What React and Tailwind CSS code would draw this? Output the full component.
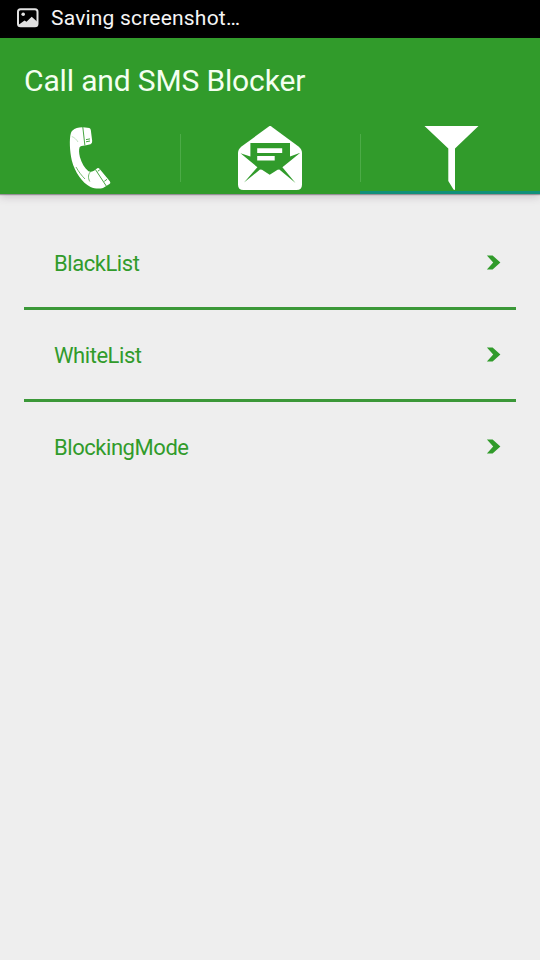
const rows = ["BlackList", "WhiteList", "BlockingMode"];

function PictureIcon() {
  return (
    <svg className="h-[20px] w-[22px]" viewBox="0 0 22 20">
      <rect x="1" y="1.2" width="19.5" height="17" rx="2.5" fill="none" stroke="#e2e2e2" strokeWidth="2" />
      <circle cx="6.2" cy="6.2" r="1.8" fill="#e2e2e2" />
      <path d="M2 17.5V16.5L7.5 12.5l2 1.3 5.2-5L20 13.5v4.5H2z" fill="#e2e2e2" />
    </svg>
  );
}

function PhoneIcon() {
  return (
    <svg className="size-16" viewBox="58 126 64 64">
      <path
        d="M72.5 130.5C75 128 79 127 83.3 127.2L89.3 128.1Q90.6 128.5 90.8 130L92.2 141Q92.3 143.5 90.5 144.2L85 145.6C82 146 80.5 146.2 79.6 147.3C78.8 149.5 78.9 153 79.9 157C81.6 163 84.5 168 88.5 171.3C90.5 172.2 92 171.5 94 170.8L97.3 168.2Q98.5 167.5 99.5 168.8L110 181.5Q111 183 109.5 184L103 188C99 189 94.5 188.6 90.5 187C82 182.5 75 172.5 71.8 160.5C69.7 151 69.2 139 70.8 133.5Q71.2 131.5 72.5 130.5Z"
        fill="#fff"
      />
      <g fill="none" stroke="#319b2b" strokeWidth="0.9">
        <path d="M82.8 127L84.9 145.5" />
        <path d="M95.4 169.5L106.4 186.2" />
        <path d="M71.8 136.5C74.5 137.5 76.5 139.5 78 142" strokeWidth="0.3" />
        <path d="M76 167C78.5 171.5 81.5 175.5 85 179" strokeWidth="0.7" />
        <path d="M89.8 181.5C87.8 178 88 174 91 171.2" strokeWidth="0.7" />
        <path d="M86 139.6L90 138.9M86 141.8L90 141M97.8 171.2L99.8 169.8M104.3 181.3L107 179.3" />
      </g>
    </svg>
  );
}

function EnvelopeIcon() {
  return (
    <svg className="size-16" viewBox="238 126 64 64">
      <path
        d="M269.5 126Q270.2 125.7 271 126.2L298.5 146.5Q302 149.3 302 153V184.5Q302 190 296.5 190H243.5Q238 190 238 184.5V153Q238 149.3 241.5 146.5Z"
        fill="#fff"
      />
      <path
        d="M250.4 143H290V156.6L300.3 152.8L282.4 167.2L295.5 183L279.3 169.6L277.6 169.8L269.7 174.8L262 169.8L260 169.6L244 182.5L257.4 167.2L240.5 153.3L250.4 156.6Z"
        fill="#319b2b"
      />
      <path d="M257.2 148.2H282.2V153H257.2ZM257.2 156H274.7V160.5H257.2Z" fill="#fff" />
    </svg>
  );
}

function FunnelIcon() {
  return (
    <svg className="size-16" viewBox="418 126 64 64">
      <path d="M424.5 126H478.5L455 148.5V190L453.5 189.5L448.3 181V148.5Z" fill="#fff" />
    </svg>
  );
}

export default function App() {
  return (
    <div className="flex h-[960px] w-[540px] flex-col overflow-hidden bg-[#eee] font-[Roboto,sans-serif]">
      <div className="flex h-[38px] items-center gap-3 bg-black pb-[2px] pl-[17px] text-[21px] tracking-[0.2px] text-[#f5f5f5]">
        <PictureIcon />
        <span className="whitespace-nowrap pt-[2px]">Saving screenshot…</span>
      </div>
      <header className="h-[156px] shrink-0 bg-[#319b2b] shadow-[0_1px_1px_rgba(90,80,90,0.5),0_3px_8px_rgba(80,60,80,0.22)]">
        <h1 className="flex h-[84px] items-center pl-6 text-[30px] font-normal tracking-[-0.15px] text-[#f4fff0]">
          <span className="whitespace-nowrap">Call and SMS Blocker</span>
        </h1>
        <nav className="grid h-[72px] grid-cols-3">
          <div className="flex justify-center pt-1">
            <PhoneIcon />
          </div>
          <div className="flex">
            <div className="my-3 w-px bg-[#4cab47]" />
            <div className="-ml-px flex flex-1 justify-center pt-1">
              <EnvelopeIcon />
            </div>
          </div>
          <div className="flex border-b-[3px] border-[#11907a]">
            <div className="mt-3 h-12 w-px bg-[#4cab47]" />
            <div className="-ml-px flex flex-1 justify-center pt-1">
              <FunnelIcon />
            </div>
          </div>
        </nav>
      </header>
      <main className="px-6 pt-6">
        {rows.map((label) => (
          <div
            key={label}
            className="flex h-[92px] items-center justify-between border-b-[3px] border-[#3b9838] pt-[2px] pr-[15px] pl-[30px] text-[22px] tracking-[-0.45px] text-[#319b2b] last:border-transparent"
          >
            <span>{label}</span>
            <svg className="mb-[2px] h-[15px] w-[15px]" viewBox="0 0 15 15">
              <path d="M0.9 0.5H6.6L14.4 7.5L6.6 14.5H0.9L7.2 7.5Z" fill="#319b2b" />
            </svg>
          </div>
        ))}
      </main>
    </div>
  );
}
